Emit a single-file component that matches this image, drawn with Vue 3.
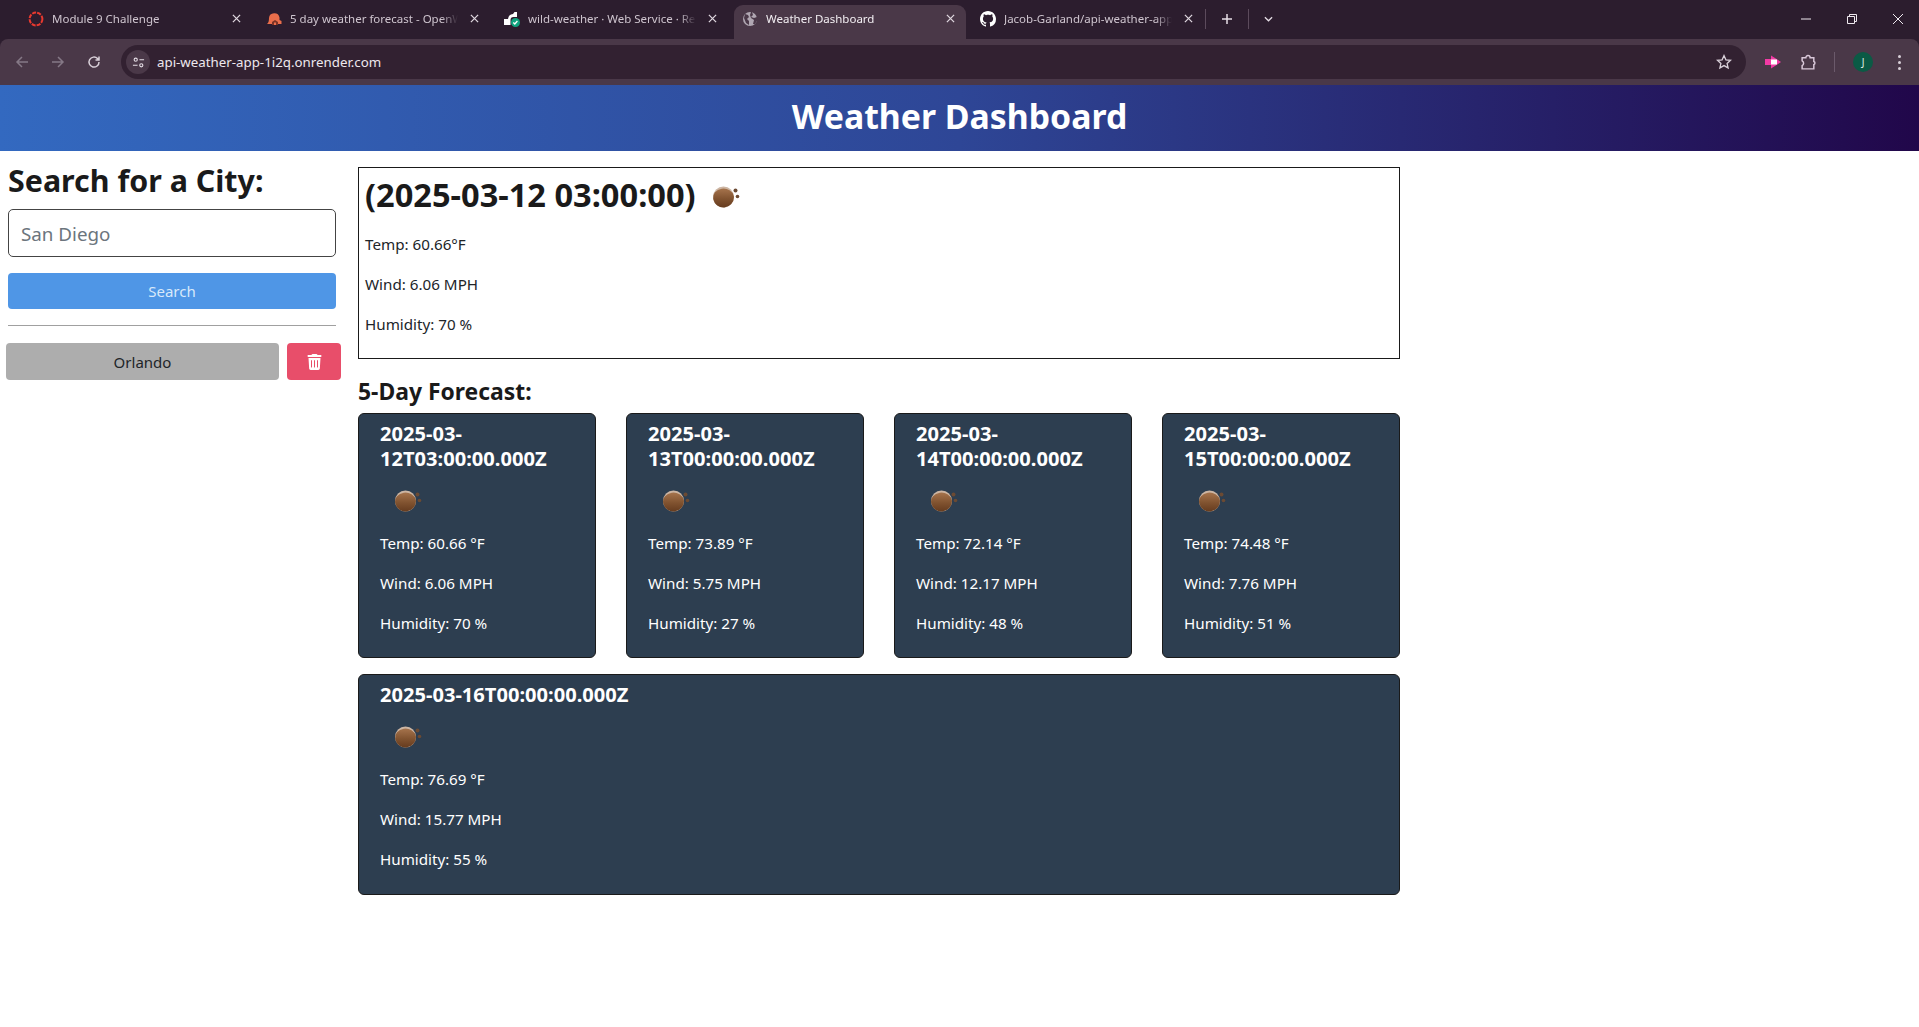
<script setup>
const tabs = [
  { title: "Module 9 Challenge", icon: "ring" },
  { title: "5 day weather forecast - OpenWeatherMap", icon: "owm" },
  { title: "wild-weather · Web Service · Render", icon: "render" },
  { title: "Weather Dashboard", icon: "globe", active: true },
  { title: "Jacob-Garland/api-weather-app: Weather", icon: "github" },
];

const days = [
  { date: "2025-03-12T03:00:00.000Z", temp: "60.66", wind: "6.06", humidity: 70 },
  { date: "2025-03-13T00:00:00.000Z", temp: "73.89", wind: "5.75", humidity: 27 },
  { date: "2025-03-14T00:00:00.000Z", temp: "72.14", wind: "12.17", humidity: 48 },
  { date: "2025-03-15T00:00:00.000Z", temp: "74.48", wind: "7.76", humidity: 51 },
  { date: "2025-03-16T00:00:00.000Z", temp: "76.69", wind: "15.77", humidity: 55 },
];
</script>

<template>
  <div class="window">
    <svg width="0" height="0" class="defs">
      <defs>
        <linearGradient id="moon" x1="0" y1="0" x2="0" y2="1">
          <stop offset="0%" stop-color="#a5734c" />
          <stop offset="55%" stop-color="#80522f" />
          <stop offset="100%" stop-color="#663c1f" />
        </linearGradient>
        <symbol id="night" viewBox="0 0 50 50">
          <circle cx="25.500" cy="25" r="10.500" fill="#cdb6a4" />
          <path d="M36 25a10.500 10.500 0 0 1-20.800 2a10 8.500 0 0 1 20.600-3z" fill="url(#moon)" />
          <circle cx="37.500" cy="18.500" r="2" fill="#6b4a33" />
          <circle cx="39.500" cy="24.500" r="1.800" fill="#6b4a33" />
        </symbol>
      </defs>
    </svg>

    <div class="chrome">
      <div class="tabstrip">
        <div v-for="tab in tabs" :key="tab.icon" class="tab" :class="{ active: tab.active }">
          <svg v-if="tab.icon === 'ring'" class="favicon" viewBox="0 0 16 16">
            <circle cx="8" cy="8" r="6.400" fill="none" stroke="#e8392f" stroke-width="2" stroke-dasharray="4 1.100" />
          </svg>
          <svg v-else-if="tab.icon === 'owm'" class="favicon" viewBox="0 0 16 16">
            <path d="M1 13c1.500-1 2-3 2-6a5.300 5.300 0 0 1 10.500-.5V9l2 1v3H7z" fill="#ea6e4b" />
            <path d="M6 11l3-2 3 2v3H6z" fill="#7a3326" />
            <rect x="8" y="11.500" width="2" height="2.500" fill="#ea6e4b" />
          </svg>
          <svg v-else-if="tab.icon === 'render'" class="favicon" viewBox="0 0 16 16">
            <path d="M0 14V8h4a5.500 5.500 0 0 1 5-5l1.500-2h2.500v5H9.500a3 3 0 0 0-3 3v5z" fill="#fff" />
            <circle cx="11.500" cy="11.500" r="4.500" fill="#10a37f" />
            <path d="M9.300 11.500l1.500 1.500 2.600-3" fill="none" stroke="#fff" stroke-width="1.300" />
          </svg>
          <svg v-else-if="tab.icon === 'globe'" class="favicon" viewBox="0 0 16 16">
            <circle cx="8" cy="8" r="7" fill="#b0a7b2" />
            <path d="M3 3l3 1 1 2-2 2 2 2v4l-3-2-2-5zM10 1l1 3-2 2 3 1 3-1v4l-2 3h-2l1-4-3-2-1-3 1-3z" fill="#4a3848" />
          </svg>
          <svg v-else class="favicon" viewBox="0 0 16 16">
            <path fill="#fff" d="M8 0C3.580 0 0 3.580 0 8c0 3.540 2.290 6.530 5.470 7.590.4.070.55-.17.55-.38 0-.19-.01-.82-.01-1.490-2.010.37-2.530-.49-2.690-.94-.09-.23-.48-.94-.82-1.130-.28-.15-.68-.52-.01-.53.63-.01 1.080.58 1.230.82.72 1.210 1.870.87 2.330.66.07-.52.28-.87.51-1.070-1.780-.2-3.640-.89-3.640-3.950 0-.87.31-1.590.82-2.150-.08-.2-.36-1.020.08-2.120 0 0 .67-.21 2.200.82.64-.18 1.320-.27 2-.27s1.360.09 2 .27c1.530-1.040 2.200-.82 2.200-.82.44 1.100.16 1.920.08 2.120.51.56.82 1.270.82 2.150 0 3.070-1.870 3.750-3.650 3.950.29.25.54.73.54 1.480 0 1.070-.01 1.930-.01 2.200 0 .21.15.46.55.38A8.010 8.010 0 0 0 16 8c0-4.420-3.580-8-8-8z" />
          </svg>
          <span class="tab-title">{{ tab.title }}</span>
          <svg class="tab-close" viewBox="0 0 10 10"><path d="M1 1l8 8M9 1l-8 8" /></svg>
        </div>
        <span class="tab-sep"></span>
        <svg class="new-tab" viewBox="0 0 12 12"><path d="M6 1v10M1 6h10" /></svg>
        <span class="tab-sep second"></span>
        <svg class="tab-search" viewBox="0 0 10 6"><path d="M1 1l4 4 4-4" /></svg>
        <div class="window-controls">
          <svg viewBox="0 0 12 12"><path d="M1 6h10" /></svg>
          <svg viewBox="0 0 12 12"><path d="M1.500 3.500h7v7h-7zM3.500 3.500v-2h7v7h-2" /></svg>
          <svg viewBox="0 0 12 12"><path d="M1 1l10 10M11 1L1 11" /></svg>
        </div>
      </div>

      <div class="toolbar">
        <div class="nav">
          <svg class="dim" viewBox="0 0 14 14"><path d="M13 7H2M7 2L2 7l5 5" /></svg>
          <svg class="dim" viewBox="0 0 14 14"><path d="M1 7h11M7 2l5 5-5 5" /></svg>
          <svg viewBox="0 0 14 14"><path d="M12 7a5 5 0 1 1-1.500-3.500L12 5M12 1.500V5H8.500" /></svg>
        </div>
        <div class="omnibox">
          <span class="site-info">
            <svg viewBox="0 0 14 14"><circle cx="4" cy="4" r="1.700" /><path d="M8 4h5M1 10h5" /><circle cx="10" cy="10" r="1.700" /></svg>
          </span>
          <span class="url">api-weather-app-1i2q.onrender.com</span>
          <svg class="star" viewBox="0 0 16 16"><path d="M8 1.600l1.900 4.200 4.600.5-3.400 3.100 1 4.500L8 11.600l-4.100 2.300 1-4.500-3.400-3.100 4.600-.5z" /></svg>
        </div>
        <div class="actions">
          <svg class="pink" viewBox="0 0 16 16">
            <path d="M6 1.500l10 6.500-10 6.500z" fill="#f23aa5" />
            <rect x="0" y="5" width="11" height="6" fill="#f23aa5" />
            <rect x="6" y="5.500" width="6" height="5" fill="#fff" />
          </svg>
          <svg class="puzzle" viewBox="0 0 16 16"><path d="M2 3.500h3.500a2 2 0 0 1 4 0H13v3.500a1.600 1.600 0 0 1 0 3V14H2v-3a2.500 2.500 0 0 0 0-4.500z" /></svg>
          <span class="action-sep"></span>
          <span class="avatar">J</span>
          <span class="dots"><i></i><i></i><i></i></span>
        </div>
      </div>
    </div>

    <header class="app-header">
      <h1>Weather Dashboard</h1>
    </header>

    <div class="page">
      <aside class="sidebar">
        <h2>Search for a City:</h2>
        <form class="search" @submit.prevent>
          <input type="text" placeholder="San Diego" />
          <button type="submit" class="search-btn">Search</button>
        </form>
        <hr />
        <div class="history">
          <button type="button" class="city-btn">Orlando</button>
          <button type="button" class="delete-btn" aria-label="Delete">
            <svg viewBox="0 0 448 512">
              <path d="M135.200 17.700L128 32H32C14.300 32 0 46.300 0 64S14.300 96 32 96H416c17.700 0 32-14.300 32-32s-14.300-32-32-32H320l-7.200-14.300C307.400 6.800 296.300 0 284.200 0H163.800c-12.100 0-23.200 6.800-28.600 17.700zM416 128H32L53.200 467c1.600 25.300 22.600 45 47.900 45H346.900c25.300 0 46.300-19.700 47.900-45L416 128z" fill="#fff" />
              <path d="M128 200v230M224 200v230M320 200v230" stroke="#e84e6a" stroke-width="32" fill="none" />
            </svg>
          </button>
        </div>
      </aside>

      <main class="content">
        <section class="today">
          <h2><span>(2025-03-12 03:00:00)</span><svg class="weather-icon"><use href="#night" /></svg></h2>
          <p>Temp: 60.66°F</p>
          <p>Wind: 6.06 MPH</p>
          <p>Humidity: 70 %</p>
        </section>

        <h3 class="forecast-title">5-Day Forecast:</h3>
        <section class="forecast">
          <article v-for="day in days" :key="day.date" class="card">
            <h4>{{ day.date }}</h4>
            <svg class="weather-icon"><use href="#night" /></svg>
            <p>Temp: {{ day.temp }} °F</p>
            <p>Wind: {{ day.wind }} MPH</p>
            <p>Humidity: {{ day.humidity }} %</p>
          </article>
        </section>
      </main>
    </div>
  </div>
</template>

<style>
html,
body {
  margin: 0;
  background: #fff;
}
</style>

<style scoped>
.window {
  height: 1027px;
  overflow: hidden;
  font-family: "Noto Sans", "Open Sans", sans-serif;
  color: #212529;
}

.defs {
  display: block;
  height: 0;
}

/* browser chrome */
.chrome {
  background: #2c1d2e;
}

.tabstrip {
  height: 39px;
  display: flex;
  align-items: flex-start;
  padding-left: 20px;
  box-sizing: border-box;
}

.tab {
  width: 232px;
  height: 34px;
  margin: 5px 6px 0 0;
  padding: 0 8px 7px;
  box-sizing: border-box;
  display: flex;
  align-items: center;
  color: #cfc5cf;
  font-size: 11.500px;
  border-radius: 9px 9px 0 0;
}

.tab.active {
  background: #4a3848;
  color: #f2eef2;
}

.favicon {
  width: 16px;
  height: 16px;
  flex: none;
}

.tab-title {
  flex: 1;
  margin-left: 8px;
  white-space: nowrap;
  overflow: hidden;
  -webkit-mask-image: linear-gradient(90deg, #000 90%, transparent);
  mask-image: linear-gradient(90deg, #000 90%, transparent);
}

.tab-close {
  width: 9px;
  height: 9px;
  margin: 0 3px 0 12px;
  flex: none;
}

.tab-close path {
  fill: none;
  stroke: #e0d8e0;
  stroke-width: 1.400;
}

.tab-sep {
  width: 1px;
  height: 20px;
  margin: 9px 0 0 -5px;
  background: #5c4b5c;
}

.tab-sep.second {
  margin-left: 15px;
}

.new-tab {
  width: 12px;
  height: 12px;
  margin: 13px 0 0 15px;
}

.new-tab path {
  fill: none;
  stroke: #e6dee6;
  stroke-width: 1.500;
}

.tab-search {
  width: 9px;
  height: 6px;
  margin: 16px 0 0 15px;
}

.tab-search path {
  fill: none;
  stroke: #e6dee6;
  stroke-width: 1.400;
}

.window-controls {
  margin-left: auto;
  display: flex;
  gap: 34px;
  padding: 13px 15px 0 0;
}

.window-controls svg {
  width: 12px;
  height: 12px;
}

.window-controls path {
  fill: none;
  stroke: #efe9ef;
  stroke-width: 1;
}

.toolbar {
  height: 46px;
  background: #4a3848;
  border-radius: 8px 8px 0 0;
  display: flex;
  align-items: center;
  box-sizing: border-box;
}

.nav {
  display: flex;
  gap: 22px;
  padding-left: 15px;
  width: 105px;
  box-sizing: border-box;
}

.nav svg {
  width: 14px;
  height: 14px;
  flex: none;
}

.nav path {
  fill: none;
  stroke: #d9d0d9;
  stroke-width: 1.500;
}

.nav .dim path {
  stroke: #857886;
}

.omnibox {
  width: 1625px;
  margin-left: 16px;
  height: 34px;
  background: #322131;
  border-radius: 17px;
  display: flex;
  align-items: center;
  padding: 0 14px 0 5px;
  box-sizing: border-box;
}

.site-info {
  width: 24px;
  height: 24px;
  border-radius: 50%;
  background: #4a3848;
  display: flex;
  align-items: center;
  justify-content: center;
}

.site-info svg {
  width: 13px;
  height: 13px;
}

.site-info path,
.site-info circle {
  fill: none;
  stroke: #e6dee6;
  stroke-width: 1.200;
}

.url {
  margin-left: 7px;
  color: #eee8ee;
  font-size: 13.300px;
  flex: 1;
}

.star {
  width: 16px;
  height: 16px;
  flex: none;
}

.star path {
  fill: none;
  stroke: #d9d0d9;
  stroke-width: 1.300;
}

.actions {
  display: flex;
  align-items: center;
  padding-left: 19px;
}

.pink {
  width: 16px;
  height: 16px;
}

.puzzle {
  width: 17px;
  height: 17px;
  margin-left: 19px;
}

.puzzle path {
  fill: none;
  stroke: #d9c8d9;
  stroke-width: 1.400;
}

.action-sep {
  width: 1px;
  height: 20px;
  background: #6b5a6b;
  margin-left: 17px;
}

.avatar {
  width: 20px;
  height: 20px;
  border-radius: 50%;
  background: #0b5a45;
  color: #e0f0ea;
  font-size: 10px;
  display: flex;
  align-items: center;
  justify-content: center;
  margin-left: 18px;
}

.dots {
  display: flex;
  flex-direction: column;
  gap: 3px;
  margin-left: 25px;
}

.dots i {
  width: 3px;
  height: 3px;
  border-radius: 50%;
  background: #d9d0d9;
}

/* app */
.app-header {
  height: 66px;
  background: linear-gradient(90deg, #3369c0, #2e4696 50%, #21074a);
  display: flex;
  align-items: center;
  justify-content: center;
}

.app-header h1 {
  margin: 0 0 5px;
  color: #fff;
  font-size: 33.800px;
  font-weight: 700;
}

.page {
  display: flex;
  padding-top: 16px;
}

.sidebar {
  width: 328px;
  margin-left: 8px;
  flex: none;
}

.sidebar h2 {
  margin: 0;
  font-size: 30.400px;
  line-height: 28px;
  padding-bottom: 2px;
  font-weight: 700;
  color: #1a1a1a;
}

.search {
  display: flex;
  flex-direction: column;
  margin-top: 12px;
  gap: 16px;
}

.search input {
  height: 48px;
  box-sizing: border-box;
  border: 1px solid #444;
  border-radius: 5px;
  padding: 2px 12px 0;
  font: inherit;
  font-size: 18.800px;
  outline: none;
}

.search input::placeholder {
  color: #6c757d;
}

.search-btn {
  height: 36px;
  border: none;
  border-radius: 4px;
  background: #4f96e6;
  color: #d8e9fa;
  font: inherit;
  font-size: 15px;
}

hr {
  margin: 16px 0 17px;
  border: none;
  border-top: 1px solid #a0a0a0;
}

.history {
  display: flex;
  gap: 8px;
  margin: 0 -5px 0 -2px;
}

.city-btn {
  width: 273px;
  height: 37px;
  border: none;
  border-radius: 4px;
  background: #adadad;
  color: #212529;
  font: inherit;
  font-size: 15px;
}

.delete-btn {
  width: 54px;
  height: 37px;
  border: none;
  border-radius: 4px;
  background: #e84e6a;
  display: flex;
  align-items: center;
  justify-content: center;
  padding: 0;
}

.delete-btn svg {
  width: 15px;
  height: 16px;
}

.content {
  width: 1042px;
  margin-left: 22px;
  flex: none;
}

.today {
  border: 1px solid #1a1a1a;
  padding: 4px 6px;
  height: 192px;
  box-sizing: border-box;
}

.today h2 {
  margin: 0 0 10px;
  height: 50px;
  display: flex;
  align-items: center;
  font-size: 32.600px;
  font-weight: 700;
  color: #1a1a1a;
}

.today h2 span {
  margin: 0 2px 5px 0;
}

p {
  margin: 0 0 16px;
  font-size: 15.200px;
  line-height: 24px;
}

.forecast-title {
  margin: 18px 0 7px;
  font-size: 22.900px;
  line-height: 29px;
  font-weight: 700;
  color: #1a1a1a;
}

.forecast {
  display: grid;
  grid-template-columns: repeat(4, 238px);
  justify-content: space-between;
  row-gap: 16px;
}

.card {
  background: #2d3e50;
  border: 1px solid #1a1a1a;
  border-radius: 6px;
  color: #fff;
  padding: 7px 20px 5px 21px;
  box-sizing: border-box;
  height: 245px;
}

.card:last-child {
  grid-column: 1 / -1;
  height: 221px;
}

.card h4 {
  margin: 0;
  font-size: 20.100px;
  line-height: 25px;
  font-weight: 700;
}

.weather-icon {
  width: 50px;
  height: 50px;
  flex: none;
}

.card .weather-icon {
  display: block;
  margin: 5px 0;
}
</style>
